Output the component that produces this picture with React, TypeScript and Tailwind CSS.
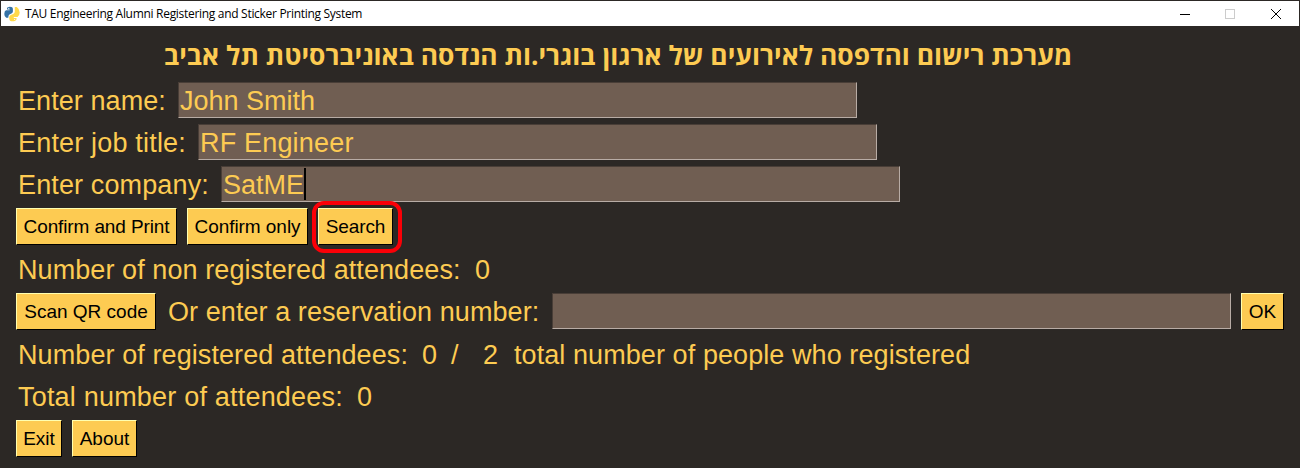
import type { ReactNode } from "react";

function Label({ children, className = "" }: { children: ReactNode; className?: string }) {
  return <span className={`whitespace-pre pt-0.5 text-[27px] leading-[32px] ${className}`}>{children}</span>;
}

function Field({ value = "", caret = false, className = "" }: { value?: string; caret?: boolean; className?: string }) {
  return (
    <div
      className={`flex h-9 w-[679px] shrink-0 items-center border border-t-[#493e37] border-l-[#493e37] border-r-[#b8aca5] border-b-[#b8aca5] bg-[#705e52] pl-px ${className}`}
    >
      <span className="pt-0.5 text-[27px] leading-[32px]">{value}</span>
      {caret && <span className="h-8 w-0.5 bg-black" />}
    </div>
  );
}

function Button({ children, className = "" }: { children: ReactNode; className?: string }) {
  return (
    <button
      className={`flex h-[37px] shrink-0 items-center justify-center whitespace-nowrap border border-t-[#ffffb0] border-l-[#ffffb0] border-r-black border-b-black bg-[#fdcb52] text-[19px] leading-none text-black ${className}`}
    >
      {children}
    </button>
  );
}

function Row({ children, className = "h-[42px]" }: { children: ReactNode; className?: string }) {
  return <div className={`flex items-center pl-4 ${className}`}>{children}</div>;
}

function Logo() {
  return (
    <svg viewBox="0 0 16 16" className="h-4 w-4 shrink-0">
      <path
        d="M3.6 1.2Q6 .1 8.2 1.2Q9 2 8.9 3.5V5.5Q8.8 7 7.4 7.6L5.4 8.4Q4.2 9 4.3 11.8H2.2Q.3 10.8.3 8Q.3 5 2 4.3H5.6V3.6H3Q2.8 2 3.6 1.2Z"
        fill="#3572a5"
      />
      <path
        d="M10.8 1H12.8Q15.6 2.8 15.7 6.5Q15.5 10 13.5 11H9.8V12H12.6Q12.8 14 11.3 14.8Q8.5 15.9 6 14.7Q5 13.8 5.2 11.2Q5.4 9.6 6.8 9L9.2 8Q10.8 7.3 10.8 5.5Z"
        fill="#ffd94a"
      />
      <circle cx="4.8" cy="2.4" r=".6" fill="#fff" />
      <circle cx="10.6" cy="13.5" r=".6" fill="#fff" />
    </svg>
  );
}

export default function App() {
  return (
    <div className="h-[468px] w-[1300px] overflow-hidden bg-[#2c2825] font-['Liberation_Sans',sans-serif] text-[#fdcb52]">
      <header className="flex h-[26px] items-center border-x border-t border-[#2c2825] bg-white pl-[3px] text-black">
        <Logo />
        <h1 className="ml-[5px] whitespace-nowrap font-['Open_Sans',sans-serif] text-[12px] tracking-[-0.3px]">
          TAU Engineering Alumni Registering and Sticker Printing System
        </h1>
        <svg viewBox="0 0 110 12" className="mr-[16px] ml-auto h-3 w-[110px] shrink-0" fill="none" shapeRendering="crispEdges">
          <path d="M7 6.5H17" stroke="#000" />
          <path d="M52.5 1.5H61.5V10.5H52.5Z" stroke="#cccccc" />
          <path d="M98 1L108 11M108 1L98 11" stroke="#000" shapeRendering="auto" />
        </svg>
      </header>
      <main>
        <div className="flex h-[53px] items-center pt-1 pl-[164px]">
          <h2 dir="rtl" className="whitespace-nowrap font-['Open_Sans',sans-serif] text-[26.4px] leading-[36px] font-bold">
            מערכת רישום והדפסה לאירועים של ארגון בוגרי.ות הנדסה באוניברסיטת תל אביב
          </h2>
        </div>
        <Row>
          <Label className="w-[162px] pl-0.5 tracking-[0.08px]">Enter name:</Label>
          <Field value="John Smith" />
        </Row>
        <Row>
          <Label className="w-[182px] pl-0.5 tracking-[0.18px]">Enter job title:</Label>
          <Field value="RF Engineer" className="tracking-[0.18px]" />
        </Row>
        <Row>
          <Label className="w-[205px] pl-0.5 tracking-[0.13px]">Enter company:</Label>
          <Field value="SatME" caret />
        </Row>
        <Row>
          <Button className="w-[161px] tracking-[-0.12px]">Confirm and Print</Button>
          <Button className="ml-[10px] w-[121px] tracking-[-0.05px]">Confirm only</Button>
          <div className="relative ml-[10px]">
            <Button className="w-[75px] tracking-[-0.1px]">Search</Button>
            <span className="pointer-events-none absolute -top-[7px] -left-[6px] h-[52px] w-[90px] rounded-[12px] border-4 border-[#fb0007]" />
          </div>
        </Row>
        <Row className="h-[43px]">
          <Label className="w-[457px] pl-0.5 tracking-[0.08px]">Number of non registered attendees:</Label>
          <Label className="pl-0.5">0</Label>
        </Row>
        <Row>
          <Button className="w-[140px]">Scan QR code</Button>
          <Label className="w-[396px] pl-3 tracking-[0.07px]">Or enter a reservation number:</Label>
          <Field />
          <Button className="ml-[10px] w-[43px]">OK</Button>
        </Row>
        <Row className="h-[43px]">
          <Label className="w-[404px] pl-0.5 tracking-[0.09px]">Number of registered attendees:</Label>
          <Label className="w-[31px] pl-0.5">0</Label>
          <Label className="w-[30px]">/</Label>
          <Label className="w-[31px] pl-0.5">2</Label>
          <Label className="pl-0.5 tracking-[0.08px]">total number of people who registered</Label>
        </Row>
        <Row>
          <Label className="w-[339px] pl-0.5 tracking-[0.2px]">Total number of attendees:</Label>
          <Label className="pl-0.5">0</Label>
        </Row>
        <Row>
          <Button className="w-[46px]">Exit</Button>
          <Button className="ml-[10px] w-[65px]">About</Button>
        </Row>
      </main>
    </div>
  );
}
